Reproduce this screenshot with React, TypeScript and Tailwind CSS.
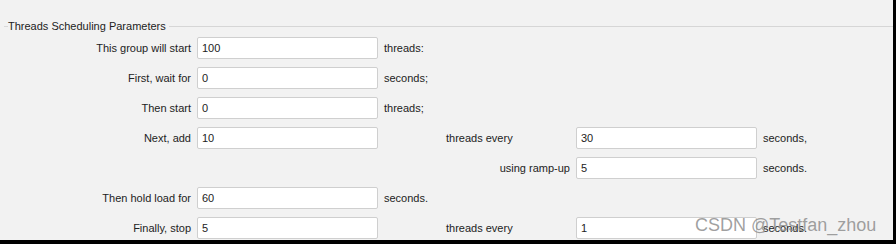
import React from "react";

type Cell = { label: string; value: string; after?: string; mid?: string; value2?: string; after2?: string };

function Field({ value }: { value: string }) {
  return (
    <div className="flex h-[22px] w-[181px] items-center rounded-[2px] border border-[#cfcfcf] bg-white pl-[4px] text-[11px] text-[#222]">
      {value}
    </div>
  );
}

export default function App() {
  const rows: Cell[] = [
    { label: "This group will start", value: "100", after: "threads:" },
    { label: "First, wait for", value: "0", after: "seconds;" },
    { label: "Then start", value: "0", after: "threads;" },
    { label: "Next, add", value: "10", mid: "threads every", value2: "30", after2: "seconds," },
    { label: "", value: "", mid: "using ramp-up", value2: "5", after2: "seconds." },
    { label: "Then hold load for", value: "60", after: "seconds." },
    { label: "Finally, stop", value: "5", mid: "threads every", value2: "1", after2: "seconds." },
  ];

  return (
    <div className="h-[244px] w-[896px] bg-black" style={{ fontFamily: '"Liberation Sans", Arial, sans-serif' }}>
      <div className="relative h-[240px] w-[893px] overflow-hidden bg-[#f2f2f2] text-[11px] text-[#222]">
        {/* Group title */}
        <div className="flex items-center pt-[20px] pl-[4px]">
          <div className="h-px w-[4px] bg-[#d8d8d8]" />
          <span className="leading-[13px]">Threads Scheduling Parameters</span>
          <div className="ml-[3px] h-[2px] flex-1 border-t border-[#d6d6d6] border-b-white" />
        </div>

        {/* Rows */}
        <div className="mt-[4px] grid grid-cols-[191px_181px_186px_181px_auto] auto-rows-[22px] gap-x-[6px] gap-y-[8px]">
          {rows.map((r, i) => (
            <React.Fragment key={i}>
              <div className="flex items-center justify-end">{r.label}</div>
              <div>{r.label ? <Field value={r.value} /> : null}</div>
              {r.mid ? (
                <div className={`flex items-center ${r.mid === "using ramp-up" ? "justify-end" : "pl-[62px]"}`}>{r.mid}</div>
              ) : (
                <div className="flex items-center">{r.after}</div>
              )}
              <div>{r.value2 ? <Field value={r.value2} /> : null}</div>
              <div className="flex items-center">{r.after2}</div>
            </React.Fragment>
          ))}
        </div>

        {/* Watermark */}
        <div className="pointer-events-none absolute left-[695px] top-[216px] whitespace-nowrap text-[18px] leading-none text-[#8f8f8f]/85">
          CSDN @Testfan_zhou
        </div>
      </div>
    </div>
  );
}
